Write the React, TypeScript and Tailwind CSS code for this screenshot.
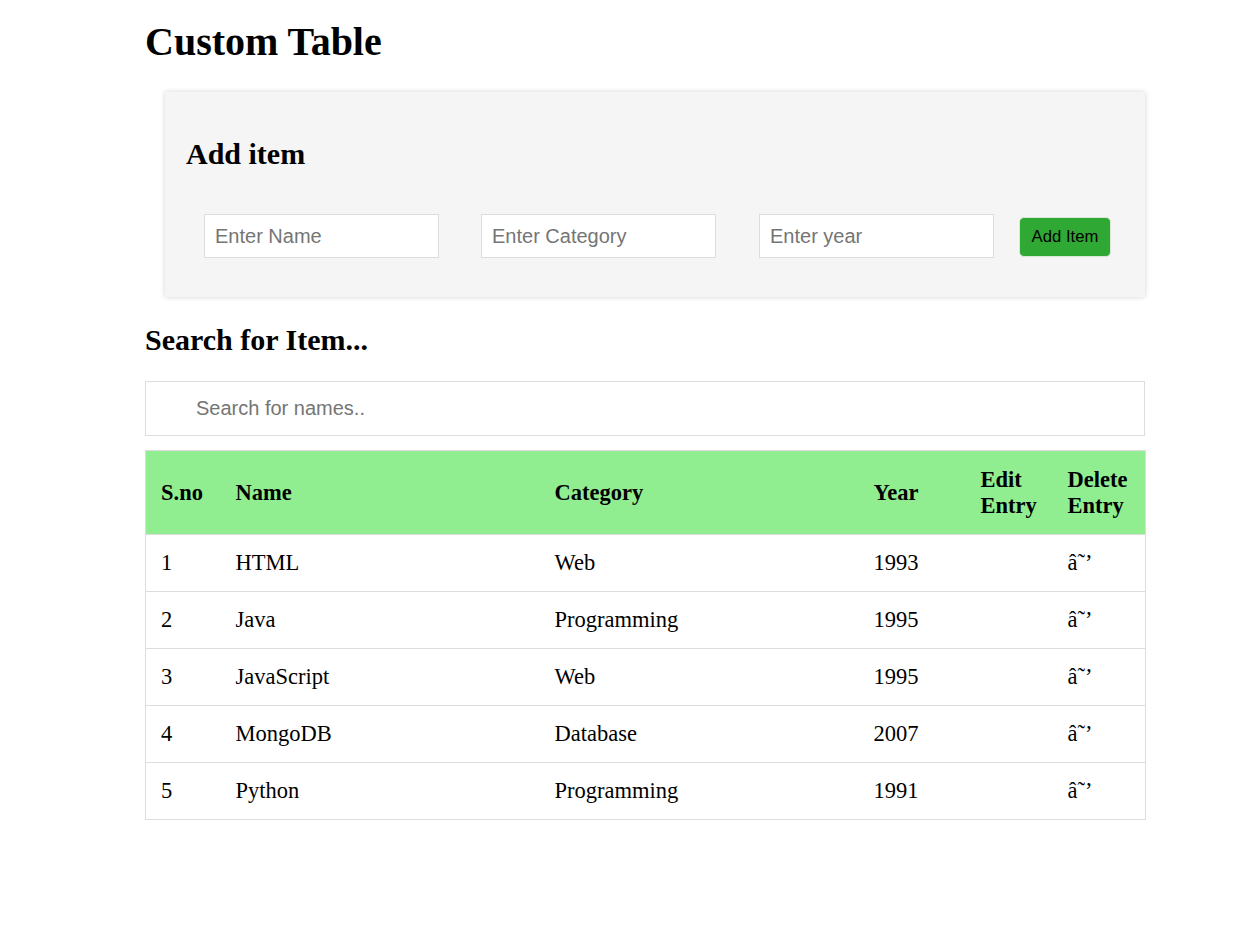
import React from "react";

const items = [
  { id: 1, name: "HTML", category: "Web", year: 1993 },
  { id: 2, name: "Java", category: "Programming", year: 1995 },
  { id: 3, name: "JavaScript", category: "Web", year: 1995 },
  { id: 4, name: "MongoDB", category: "Database", year: 2007 },
  { id: 5, name: "Python", category: "Programming", year: 1991 },
];

const serif = "font-['Liberation_Serif','Times_New_Roman',serif]";
const sans = "font-['Liberation_Sans',Arial,sans-serif]";

export default function App() {
  return (
    <div className={`min-h-screen bg-white text-black ${serif}`}>
      <div className="ml-[145px] w-[1000px] pt-[19px]">
        <h1 className="text-[40px] leading-[46px] font-bold">Custom Table</h1>

        {/* Add item card */}
        <div className="mt-[27px] ml-[20px] bg-[#f5f5f5] shadow-[0_0_5px_rgba(0,0,0,0.18)] pt-[45px] pb-[39px] pl-[21px]">
          <h2 className="text-[30px] leading-[34px] font-bold">Add item</h2>
          <div className="mt-[43px] ml-[18px] flex items-center">
            <input
              placeholder="Enter Name"
              className={`w-[235px] h-[44px] bg-white border border-[#dddddd] px-[10px] text-[20px] outline-none placeholder:text-[#757575] ${sans}`}
            />
            <input
              placeholder="Enter Category"
              className={`ml-[42px] w-[235px] h-[44px] bg-white border border-[#dddddd] px-[10px] text-[20px] outline-none placeholder:text-[#757575] ${sans}`}
            />
            <input
              placeholder="Enter year"
              className={`ml-[43px] w-[235px] h-[44px] bg-white border border-[#dddddd] px-[10px] text-[20px] outline-none placeholder:text-[#757575] ${sans}`}
            />
            <button
              className={`ml-[25px] mt-[2px] w-[92px] h-[40px] bg-[#2fa933] border border-[#d7e8d7] rounded-[5px] text-[16.7px] leading-none text-black ${sans}`}
            >
              Add Item
            </button>
          </div>
        </div>

        <h2 className="mt-[26px] text-[30px] leading-[34px] font-bold">Search for Item...</h2>
        <input
          placeholder="Search for names.."
          className={`mt-[24px] block w-[1000px] h-[55px] border border-[#dddddd] pl-[50px] text-[20px] outline-none placeholder:text-[#757575] ${sans}`}
        />

        {/* Table */}
        <table className="mt-[14px] w-[1000px] table-fixed border-collapse border border-[#dddddd] text-[22.5px] leading-[26px]">
          <colgroup>
            <col className="w-[75px]" />
            <col className="w-[319px]" />
            <col className="w-[319px]" />
            <col className="w-[107px]" />
            <col className="w-[87px]" />
            <col className="w-[93px]" />
          </colgroup>
          <thead>
            <tr className="bg-[#90ee90] border-b border-[#dddddd]">
              <th className="h-[84px] px-[15px] text-left font-bold">S.no</th>
              <th className="h-[84px] px-[15px] text-left font-bold">Name</th>
              <th className="h-[84px] px-[15px] text-left font-bold">Category</th>
              <th className="h-[84px] px-[15px] text-left font-bold">Year</th>
              <th className="h-[84px] px-[15px] text-left font-bold">Edit Entry</th>
              <th className="h-[84px] px-[15px] text-left font-bold">Delete Entry</th>
            </tr>
          </thead>
          <tbody>
            {items.map((item) => (
              <tr key={item.id} className="border-b border-[#dddddd]">
                <td className="h-[57px] px-[15px]">{item.id}</td>
                <td className="h-[57px] px-[15px]">{item.name}</td>
                <td className="h-[57px] px-[15px]">{item.category}</td>
                <td className="h-[57px] px-[15px]">{item.year}</td>
                <td className="h-[57px] px-[15px]"></td>
                <td className="h-[57px] px-[15px]">â˜’</td>
              </tr>
            ))}
          </tbody>
        </table>
      </div>
    </div>
  );
}
